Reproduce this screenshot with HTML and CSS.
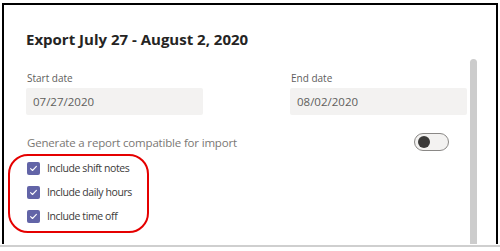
FILE: index.html
```html
<!DOCTYPE html>
<html>
<head>
    <meta charset="utf-8">
    <title>Export</title>
    <link rel="stylesheet" href="styles.css">
</head>
<body>
<div class="frame">
    <div class="panel">
        <h2 class="title">Export July 27 - August 2, 2020</h2>
        <div class="dates">
            <div class="field">
                <label class="field-label">Start date</label>
                <div class="field-input">07/27/2020</div>
            </div>
            <div class="field">
                <label class="field-label">End date</label>
                <div class="field-input">08/02/2020</div>
            </div>
        </div>
        <div class="toggle-row">
            <span class="toggle-text">Generate a report compatible for import</span>
            <span class="toggle"><span class="toggle-knob"></span></span>
        </div>
        <ul class="checks">
            <li class="check-item">
                <span class="check-box">
                    <svg width="9" height="9" viewBox="0 0 9 9"><path d="M1.6 4.7 L3.5 6.5 L7.4 2.4" fill="none" stroke="#fff" stroke-width="1.1" stroke-linecap="round" stroke-linejoin="round"/></svg>
                </span>
                Include shift notes
            </li>
            <li class="check-item">
                <span class="check-box">
                    <svg width="9" height="9" viewBox="0 0 9 9"><path d="M1.6 4.7 L3.5 6.5 L7.4 2.4" fill="none" stroke="#fff" stroke-width="1.1" stroke-linecap="round" stroke-linejoin="round"/></svg>
                </span>
                Include daily hours
            </li>
            <li class="check-item">
                <span class="check-box">
                    <svg width="9" height="9" viewBox="0 0 9 9"><path d="M1.6 4.7 L3.5 6.5 L7.4 2.4" fill="none" stroke="#fff" stroke-width="1.1" stroke-linecap="round" stroke-linejoin="round"/></svg>
                </span>
                Include time off
            </li>
        </ul>
    </div>
    <div class="scrollbar"></div>
    <!-- red highlight drawn over the checkboxes -->
    <div class="highlight"></div>
</div>
<div class="rule"></div>
</body>
</html>
```

FILE: styles.css
```css
html, body{
    margin: 0;
    padding: 0;
}
body{
    background: #fff;
    font-family: "Open Sans", "Noto Sans", sans-serif;
    width: 500px;
    height: 251px;
    overflow: hidden;
}
.frame{
    position: relative;
    display: flex;
    margin: 3px 2px 0 2px;
    height: 241px;
    border: 2px solid #000;
    border-bottom: none;
    box-sizing: border-box;
}
.rule{
    height: 2px;
    margin-top: 1px;
    background: #cfcfcf;
}
.panel{
    flex: 1;
    padding: 24px 0 0 22px;
}
.title{
    margin: 0;
    font-size: 15px;
    font-weight: 700;
    line-height: 20px;
    color: #252423;
}
.dates{
    display: grid;
    grid-template-columns: 177px 177px;
    column-gap: 87px;
    margin-top: 22px;
}
.field-label{
    display: block;
    font-size: 10px;
    line-height: 14px;
    color: #605e5c;
    margin-left: 1px;
}
.field-input{
    margin-top: 3px;
    height: 27px;
    line-height: 27px;
    padding-left: 7px;
    background: #f3f2f1;
    border-radius: 2px;
    font-size: 11.5px;
    color: #605e5c;
}
.toggle-row{
    display: flex;
    align-items: center;
    justify-content: space-between;
    width: 423px;
    margin-top: 18px;
}
.toggle-text{
    font-size: 11.5px;
    letter-spacing: -0.18px;
    color: #7a7774;
    margin-left: 1px;
}
.toggle{
    display: flex;
    align-items: center;
    width: 35px;
    height: 18px;
    box-sizing: border-box;
    border: 1px solid #8a8886;
    border-radius: 9px;
    background: #f3f2f1;
    padding-left: 3px;
}
.toggle-knob{
    width: 12px;
    height: 12px;
    border-radius: 50%;
    background: #3b3a39;
}
.checks{
    list-style: none;
    margin: 5px 0 0 0;
    padding: 0;
}
.check-item{
    display: flex;
    align-items: center;
    height: 24px;
    font-size: 10.5px;
    letter-spacing: -0.4px;
    color: #3b3a39;
}
.check-box{
    display: flex;
    align-items: center;
    justify-content: center;
    width: 13px;
    height: 13px;
    margin: 0 7px 0 1px;
    border-radius: 2px;
    background: #6264a7;
}
.scrollbar{
    width: 7px;
    margin: 54px 19px 0 0;
    background: #cccccc;
    border-radius: 4px 4px 0 0;
}
.highlight{
    position: absolute;
    left: 4px;
    top: 149px;
    width: 141px;
    height: 79px;
    box-sizing: border-box;
    border: 2.5px solid #e50000;
    border-radius: 20px;
}
```
